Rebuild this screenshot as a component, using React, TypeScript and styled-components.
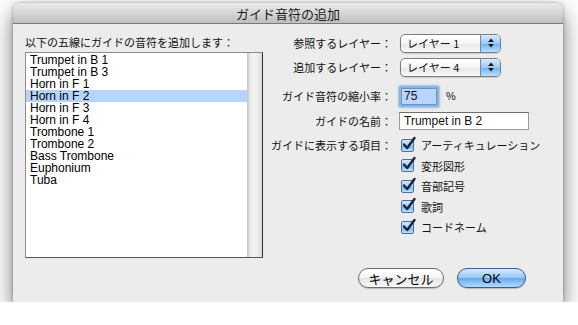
import React from "react";
import styled, { createGlobalStyle, css } from "styled-components";

const GlobalStyle = createGlobalStyle`
  html, body {
    margin: 0;
    padding: 0;
    background: #ffffff;
  }
  body {
    font-family: "Liberation Sans", "Noto Sans CJK JP", sans-serif;
    color: #111;
  }
`;

const PARTS = [
  "Trumpet in B 1",
  "Trumpet in B 3",
  "Horn in F 1",
  "Horn in F 2",
  "Horn in F 3",
  "Horn in F 4",
  "Trombone 1",
  "Trombone 2",
  "Bass Trombone",
  "Euphonium",
  "Tuba",
];

const ITEMS = ["アーティキュレーション", "変形図形", "音部記号", "歌詞", "コードネーム"];

const CheckMark: React.FC = () => (
  <svg width="16" height="16" viewBox="0 0 16 16" style={{ position: "absolute", left: -1, top: -4 }}>
    <path
      d="M3 8.5 L6.2 12 L13.5 2"
      fill="none"
      stroke="#16243f"
      strokeWidth="2.4"
      strokeLinecap="round"
      strokeLinejoin="round"
    />
  </svg>
);

const Arrows: React.FC = () => (
  <svg width="8" height="12" viewBox="0 0 8 12">
    <path d="M4 1.5 L7 5 L1 5 Z" fill="#1b1b1b" />
    <path d="M4 10.5 L7 7 L1 7 Z" fill="#1b1b1b" />
  </svg>
);

const Popup: React.FC<{ value: string }> = ({ value }) => (
  <PopupBox>
    <PopupText>{value}</PopupText>
    <PopupArrow>
      <Arrows />
    </PopupArrow>
  </PopupBox>
);

export default function App() {
  return (
    <Page>
      <GlobalStyle />
      <Dialog>
        <TitleBar>ガイド音符の追加</TitleBar>
        <Main>
          <LeftColumn>
            <Label>以下の五線にガイドの音符を追加します：</Label>
            <ListBox>
              <ListItems>
                {PARTS.map((p, i) => (
                  <ListRow key={p} selected={i === 3}>
                    {p}
                  </ListRow>
                ))}
              </ListItems>
              <ScrollTrack />
            </ListBox>
          </LeftColumn>
          <Form>
            <FieldLabel>参照するレイヤー：</FieldLabel>
            <Cell>
              <Popup value="レイヤー 1" />
            </Cell>
            <FieldLabel>追加するレイヤー：</FieldLabel>
            <Cell>
              <Popup value="レイヤー 4" />
            </Cell>
            <FieldLabel>ガイド音符の縮小率：</FieldLabel>
            <Cell>
              <ScaleField>75</ScaleField>
              <Unit>%</Unit>
            </Cell>
            <FieldLabel>ガイドの名前：</FieldLabel>
            <Cell>
              <NameField>Trumpet in B 2</NameField>
            </Cell>
            <FieldLabel top>ガイドに表示する項目：</FieldLabel>
            <CheckList>
              {ITEMS.map((t) => (
                <CheckRow key={t}>
                  <CheckBox>
                    <CheckMark />
                  </CheckBox>
                  <span>{t}</span>
                </CheckRow>
              ))}
            </CheckList>
          </Form>
        </Main>
        <Footer>
          <Button>キャンセル</Button>
          <Button primary>OK</Button>
        </Footer>
      </Dialog>
    </Page>
  );
}

const Page = styled.div`
  padding: 3px 0 0 13px;
`;

const Dialog = styled.div`
  width: 550px;
  background: #ececec;
  border-radius: 6px 6px 0 0;
  box-shadow: 0 9px 22px rgba(0, 0, 0, 0.55), 0 0 3px rgba(0, 0, 0, 0.35);
  display: flex;
  flex-direction: column;
`;

const TitleBar = styled.div`
  height: 20px;
  border-bottom: 1px solid #7a7a7a;
  border-radius: 6px 6px 0 0;
  background: linear-gradient(to bottom, #eaeaea 0%, #d6d6d6 50%, #bebebe 100%);
  display: flex;
  align-items: center;
  justify-content: center;
  font-family: "Noto Sans CJK JP", sans-serif;
  font-size: 13px;
  color: #1a1a1a;
`;

const Main = styled.div`
  display: flex;
  align-items: flex-start;
  padding-top: 9px;
`;

const LeftColumn = styled.div`
  margin-left: 12px;
  width: 238px;
  display: flex;
  flex-direction: column;
`;

const Label = styled.div`
  margin-top: 2px;
  margin-bottom: 3px;
  height: 14px;
  line-height: 14px;
  font-family: "Noto Sans CJK JP", sans-serif;
  font-size: 11px;
  white-space: nowrap;
`;

const ListBox = styled.div`
  height: 204px;
  display: flex;
  background: #fff;
  border: 1px solid #8c8c8c;
  border-right-color: #2b2b2b;
  border-bottom-color: #555;
`;

const ListItems = styled.div`
  flex: 1;
  padding-top: 1px;
`;

const ListRow = styled.div<{ selected?: boolean }>`
  height: 12px;
  line-height: 12px;
  padding-left: 4px;
  font-size: 12px;
  font-family: "Liberation Sans", sans-serif;
  color: #000;
  ${({ selected }) =>
    selected &&
    css`
      background: #b6d5fc;
    `}
`;

const ScrollTrack = styled.div`
  width: 15px;
  background: linear-gradient(to right, #c4c4c4 0%, #eeeeee 25%, #f3f3f3 55%, #dcdcdc 100%);
`;

const Form = styled.div`
  display: grid;
  grid-template-columns: 129px auto;
  grid-template-rows: 20px 28px 30px 20px auto;
  column-gap: 7px;
  align-items: center;
`;

const FieldLabel = styled.div<{ top?: boolean }>`
  justify-self: end;
  font-family: "Noto Sans CJK JP", sans-serif;
  font-size: 11px;
  line-height: 14px;
  white-space: nowrap;
  ${({ top }) =>
    top &&
    css`
      align-self: start;
      padding-top: 7px;
    `}
`;

const Cell = styled.div`
  display: flex;
  align-items: center;
`;

const PopupBox = styled.div`
  width: 99px;
  height: 17px;
  margin-left: 1px;
  display: flex;
  border: 1px solid #7d7d7d;
  border-radius: 5px;
  overflow: hidden;
  background: linear-gradient(to bottom, #ffffff 0%, #f6f6f6 50%, #e6e6e6 51%, #fafafa 100%);
  box-shadow: 0 1px 1px rgba(0, 0, 0, 0.15);
`;

const PopupText = styled.div`
  flex: 1;
  padding-left: 6px;
  font-family: "Noto Sans CJK JP", sans-serif;
  font-size: 11px;
  line-height: 17px;
`;

const PopupArrow = styled.div`
  width: 19px;
  display: flex;
  align-items: center;
  justify-content: center;
  border-left: 1px solid #6b8cb8;
  background: linear-gradient(to bottom, #d6ebff 0%, #9ccbf6 50%, #6fb0ef 51%, #b9e0ff 100%);
`;

const ScaleField = styled.div`
  width: 32px;
  height: 15px;
  margin-left: 2px;
  padding-left: 2px;
  background: #b8d6fb;
  border: 1px solid #6b93c2;
  box-shadow: 0 0 0 2px #86b4e6, 0 0 2px 3px rgba(110, 160, 220, 0.6);
  border-radius: 1px;
  font-size: 12px;
  line-height: 15px;
  font-family: "Liberation Sans", sans-serif;
`;

const Unit = styled.span`
  margin-left: 9px;
  font-size: 11px;
  font-family: "Liberation Sans", sans-serif;
`;

const NameField = styled.div`
  width: 124px;
  height: 16px;
  padding-left: 4px;
  background: #fff;
  border: 1px solid #9a9a9a;
  border-top-color: #6f6f6f;
  font-size: 12px;
  line-height: 16px;
  font-family: "Liberation Sans", sans-serif;
`;

const CheckList = styled.div`
  padding-top: 4px;
  display: flex;
  flex-direction: column;
`;

const CheckRow = styled.div`
  height: 20.5px;
  display: flex;
  align-items: center;
  gap: 7px;
  padding-left: 2px;
  font-family: "Noto Sans CJK JP", sans-serif;
  font-size: 11px;
`;

const CheckBox = styled.div`
  position: relative;
  width: 11px;
  height: 11px;
  border: 1px solid #4f6f9a;
  border-radius: 2px;
  background: linear-gradient(to bottom, #d4e9fe 0%, #a3cdf6 50%, #78b3ee 55%, #c1e2ff 100%);
`;

const Footer = styled.div`
  display: flex;
  justify-content: flex-end;
  gap: 13px;
  padding: 10px 37px 14px 0;
`;

const Button = styled.div<{ primary?: boolean }>`
  height: 18px;
  width: ${({ primary }) => (primary ? "67px" : "84px")};
  border-radius: 10px;
  display: flex;
  align-items: center;
  justify-content: center;
  font-family: "Liberation Sans", "Noto Sans CJK JP", sans-serif;
  font-size: 13px;
  color: #000;
  border: 1px solid #6e6e6e;
  background: linear-gradient(to bottom, #ffffff 0%, #f4f4f4 50%, #e4e4e4 52%, #fbfbfb 100%);
  box-shadow: 0 1px 1px rgba(0, 0, 0, 0.2);
  ${({ primary }) =>
    primary &&
    css`
      border-color: #3a5c93;
      background: linear-gradient(to bottom, #d5ebff 0%, #93c6f4 50%, #64aaee 52%, #b4dcff 100%);
    `}
`;
